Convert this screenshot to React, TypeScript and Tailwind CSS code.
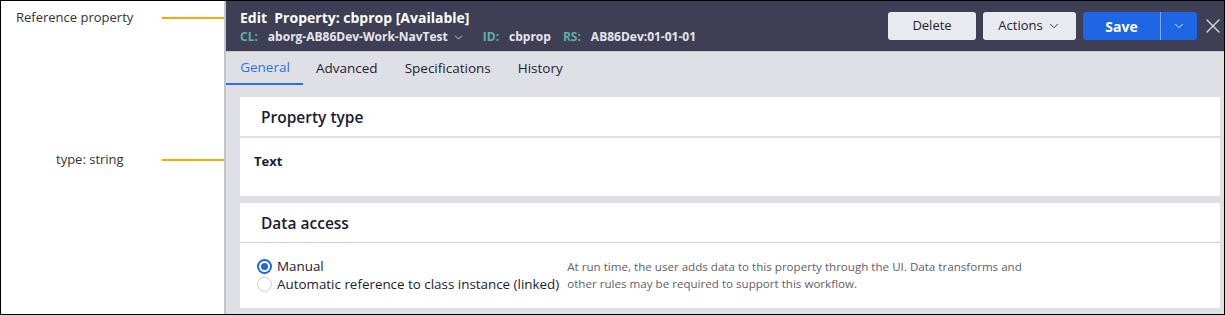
import { ChevronDown } from 'lucide-react';

const font = { fontFamily: '"Open Sans", "Noto Sans", sans-serif' };

export default function App() {
  return (
    <div
      className="w-[1225px] h-[315px] border border-black flex bg-white overflow-hidden"
      style={font}
    >
      {/* Annotations */}
      <div className="w-[223px] shrink-0 flex flex-col text-[13px] text-[#333]">
        <div className="h-[34px] flex items-center">
          <span className="pl-[15px]">Reference property</span>
          <div className="ml-auto w-[62px] h-[2px] bg-[#f5aa00]" />
        </div>
        <div className="h-[108px]" />
        <div className="h-[34px] flex items-center">
          <span className="pl-[55px]">type: string</span>
          <div className="ml-auto w-[62px] h-[2px] bg-[#f5aa00]" />
        </div>
      </div>
      <div className="w-[2px] shrink-0 bg-[#c4c5cb]" />

      {/* Rule form */}
      <div className="flex-1 flex flex-col bg-[#dfe0e5]">
        {/* Header */}
        <div className="h-[50px] shrink-0 bg-[#3e3f54] flex items-center pl-[14px] pr-[4px]">
          <div className="flex flex-col pt-[2px]">
            <div className="text-[14px] font-bold text-white leading-[20px] whitespace-pre">
              Edit  Property: cbprop [Available]
            </div>
            <div className="flex items-center text-[12px] font-bold leading-[18px] text-[#e6e6ec]">
              <span className="text-[#5fb0aa]">CL:</span>
              <span className="ml-[10px]">aborg-AB86Dev-Work-NavTest</span>
              <ChevronDown className="ml-[4px] w-[13px] h-[13px]" strokeWidth={1.5} />
              <span className="ml-[18px] text-[#5fb0aa]">ID:</span>
              <span className="ml-[10px]">cbprop</span>
              <span className="ml-[12px] text-[#5fb0aa]">RS:</span>
              <span className="ml-[10px]">AB86Dev:01-01-01</span>
            </div>
          </div>
          <div className="ml-auto flex items-center">
            <button className="w-[88px] h-[28px] rounded-[3px] bg-[#e9eaef] text-[13px] text-[#1f2033]">
              Delete
            </button>
            <button className="ml-[7px] w-[93px] h-[28px] rounded-[3px] bg-[#e9eaef] text-[13px] text-[#1f2033] flex items-center justify-center gap-[4px]">
              Actions
              <ChevronDown className="w-[14px] h-[14px]" strokeWidth={1.5} />
            </button>
            <div className="ml-[7px] h-[28px] flex rounded-[3px] bg-[#1f66e5] overflow-hidden">
              <button className="w-[77px] text-[14px] font-bold text-white">Save</button>
              <div className="w-px bg-[#7ea6f0]" />
              <button className="w-[36px] flex items-center justify-center text-white">
                <ChevronDown className="w-[14px] h-[14px]" strokeWidth={1.5} />
              </button>
            </div>
            <svg className="ml-[9px] w-[14px] h-[14px]" viewBox="0 0 14 14" fill="none">
              <path d="M1 1L13 13M13 1L1 13" stroke="#dcdce2" strokeWidth="1.4" strokeLinecap="round" />
            </svg>
          </div>
        </div>
        <div className="h-px bg-[#c9cad0]" />

        {/* Tabs */}
        <div className="h-[33px] shrink-0 flex items-end text-[13.5px] text-[#1f2033]">
          <div className="w-[77px] h-[33px] flex items-center justify-center text-[#2f6fe6] border-b-2 border-[#2f6fe6] pl-[1px]">
            General
          </div>
          <div className="h-[33px] flex items-center ml-[13px]">Advanced</div>
          <div className="h-[33px] flex items-center ml-[27px]">Specifications</div>
          <div className="h-[33px] flex items-center ml-[27px]">History</div>
        </div>

        {/* Cards */}
        <div className="flex-1 flex flex-col pl-[14px] pr-[4px] pt-[12px] gap-[7px]">
          <div className="bg-white h-[99px] flex flex-col">
            <div className="h-[39px] flex items-center pl-[21px] pt-[3px] text-[15.5px] font-semibold text-[#1a1c32]">
              Property type
            </div>
            <div className="h-[2px] bg-[#dfe0e5]" />
            <div className="flex-1 pl-[14px] pt-[14px] text-[13px] leading-[18px] font-bold text-[#1a1c32]">
              Text
            </div>
          </div>

          <div className="bg-white h-[105px] flex flex-col">
            <div className="h-[39px] flex items-center pl-[21px] pt-[2px] text-[15.5px] font-semibold text-[#1a1c32]">
              Data access
            </div>
            <div className="h-px bg-[#c9d2de]" />
            <div className="flex-1 flex pl-[17px] pt-[14px]">
              <div className="flex flex-col text-[13.4px] text-[#1a1c32] leading-[18px]">
                <label className="flex items-center gap-[5px]">
                  <span className="w-[15px] h-[15px] rounded-full border-2 border-[#1f66e5] flex items-center justify-center">
                    <span className="w-[7px] h-[7px] rounded-full bg-[#1f66e5]" />
                  </span>
                  Manual
                </label>
                <label className="flex items-center gap-[5px]">
                  <span className="w-[15px] h-[15px] rounded-full border border-[#cfd0d6]" />
                  Automatic reference to class instance (linked)
                </label>
              </div>
              <div className="ml-[8px] pt-[1px] text-[11.6px] leading-[17px] text-[#5f6068] w-[470px]">
                At run time, the user adds data to this property through the UI. Data transforms and
                <br />
                other rules may be required to support this workflow.
              </div>
            </div>
          </div>
        </div>
      </div>
    </div>
  );
}
